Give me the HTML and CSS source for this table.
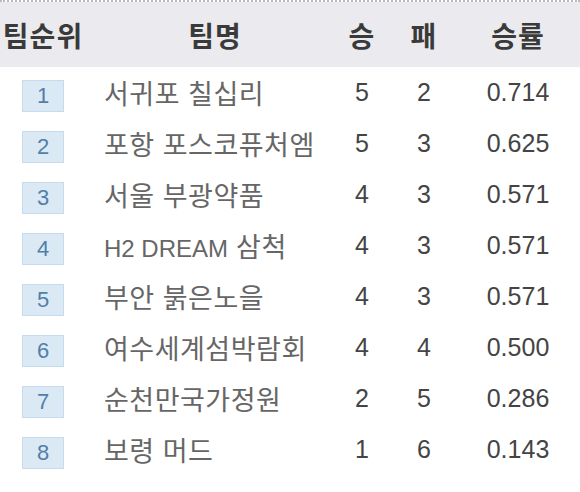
FILE: index.html
```html
<!DOCTYPE html>
<html lang="ko">
<head>
  <meta charset="UTF-8">
  <title>팀순위</title>
  <link rel="stylesheet" href="styles.css">
</head>
<body>
  <div class="standings">
    <div class="row head">
      <div class="c-rank">팀순위</div>
      <div class="c-team">팀명</div>
      <div class="c-num">승</div>
      <div class="c-num">패</div>
      <div class="c-pct">승률</div>
    </div>
    <div class="row">
      <div class="c-rank"><span class="badge">1</span></div>
      <div class="c-team name">서귀포 칠십리</div>
      <div class="c-num">5</div><div class="c-num">2</div><div class="c-pct">0.714</div>
    </div>
    <div class="row">
      <div class="c-rank"><span class="badge">2</span></div>
      <div class="c-team name">포항 포스코퓨처엠</div>
      <div class="c-num">5</div><div class="c-num">3</div><div class="c-pct">0.625</div>
    </div>
    <div class="row">
      <div class="c-rank"><span class="badge">3</span></div>
      <div class="c-team name">서울 부광약품</div>
      <div class="c-num">4</div><div class="c-num">3</div><div class="c-pct">0.571</div>
    </div>
    <div class="row">
      <div class="c-rank"><span class="badge">4</span></div>
      <div class="c-team name"><span class="latin">H2 DREAM</span> 삼척</div>
      <div class="c-num">4</div><div class="c-num">3</div><div class="c-pct">0.571</div>
    </div>
    <div class="row">
      <div class="c-rank"><span class="badge">5</span></div>
      <div class="c-team name">부안 붉은노을</div>
      <div class="c-num">4</div><div class="c-num">3</div><div class="c-pct">0.571</div>
    </div>
    <div class="row">
      <div class="c-rank"><span class="badge">6</span></div>
      <div class="c-team name">여수세계섬박람회</div>
      <div class="c-num">4</div><div class="c-num">4</div><div class="c-pct">0.500</div>
    </div>
    <div class="row">
      <div class="c-rank"><span class="badge">7</span></div>
      <div class="c-team name">순천만국가정원</div>
      <div class="c-num">2</div><div class="c-num">5</div><div class="c-pct">0.286</div>
    </div>
    <div class="row">
      <div class="c-rank"><span class="badge">8</span></div>
      <div class="c-team name">보령 머드</div>
      <div class="c-num">1</div><div class="c-num">6</div><div class="c-pct">0.143</div>
    </div>
  </div>
</body>
</html>
```

FILE: styles.css
```css
body {
  margin: 0;
  background: #fff;
  font-family: "Noto Sans CJK KR", "Noto Sans", sans-serif;
}

.standings {
  width: 580px;
  border-top: 2px dotted #bbb;
}

.row {
  display: grid;
  grid-template-columns: 86px 258px 36px 88px 100px;
  align-items: center;
  height: 51px;
  font-size: 26px;
  color: #333;
}

.head {
  height: 65px;
  background: #ebebef;
  font-size: 28px;
  font-weight: bold;
  letter-spacing: 1px;
  color: #3a3a3a;
}

.c-rank,
.c-num,
.c-pct,
.c-team {
  text-align: center;
  white-space: nowrap;
}

.name {
  text-align: left;
  padding-left: 18px;
  color: #666;
  font-size: 27px;
  letter-spacing: 0.5px;
}

.latin {
  font-family: "Liberation Sans", sans-serif;
  font-size: 24px;
  letter-spacing: 0;
}

.row .c-num,
.row .c-pct {
  font-family: "Liberation Sans", sans-serif;
  font-size: 25px;
  color: #444;
}

.head .c-num,
.head .c-pct {
  font-family: "Noto Sans CJK KR", sans-serif;
  font-size: 28px;
  color: #3a3a3a;
}

.badge {
  display: inline-block;
  width: 40px;
  height: 30px;
  line-height: 30px;
  margin-top: 7px;
  background: #dbe9f5;
  border: 1px solid #c6dbed;
  color: #527fa8;
  font-family: "Liberation Sans", sans-serif;
  font-size: 22px;
  letter-spacing: 0;
}
```
